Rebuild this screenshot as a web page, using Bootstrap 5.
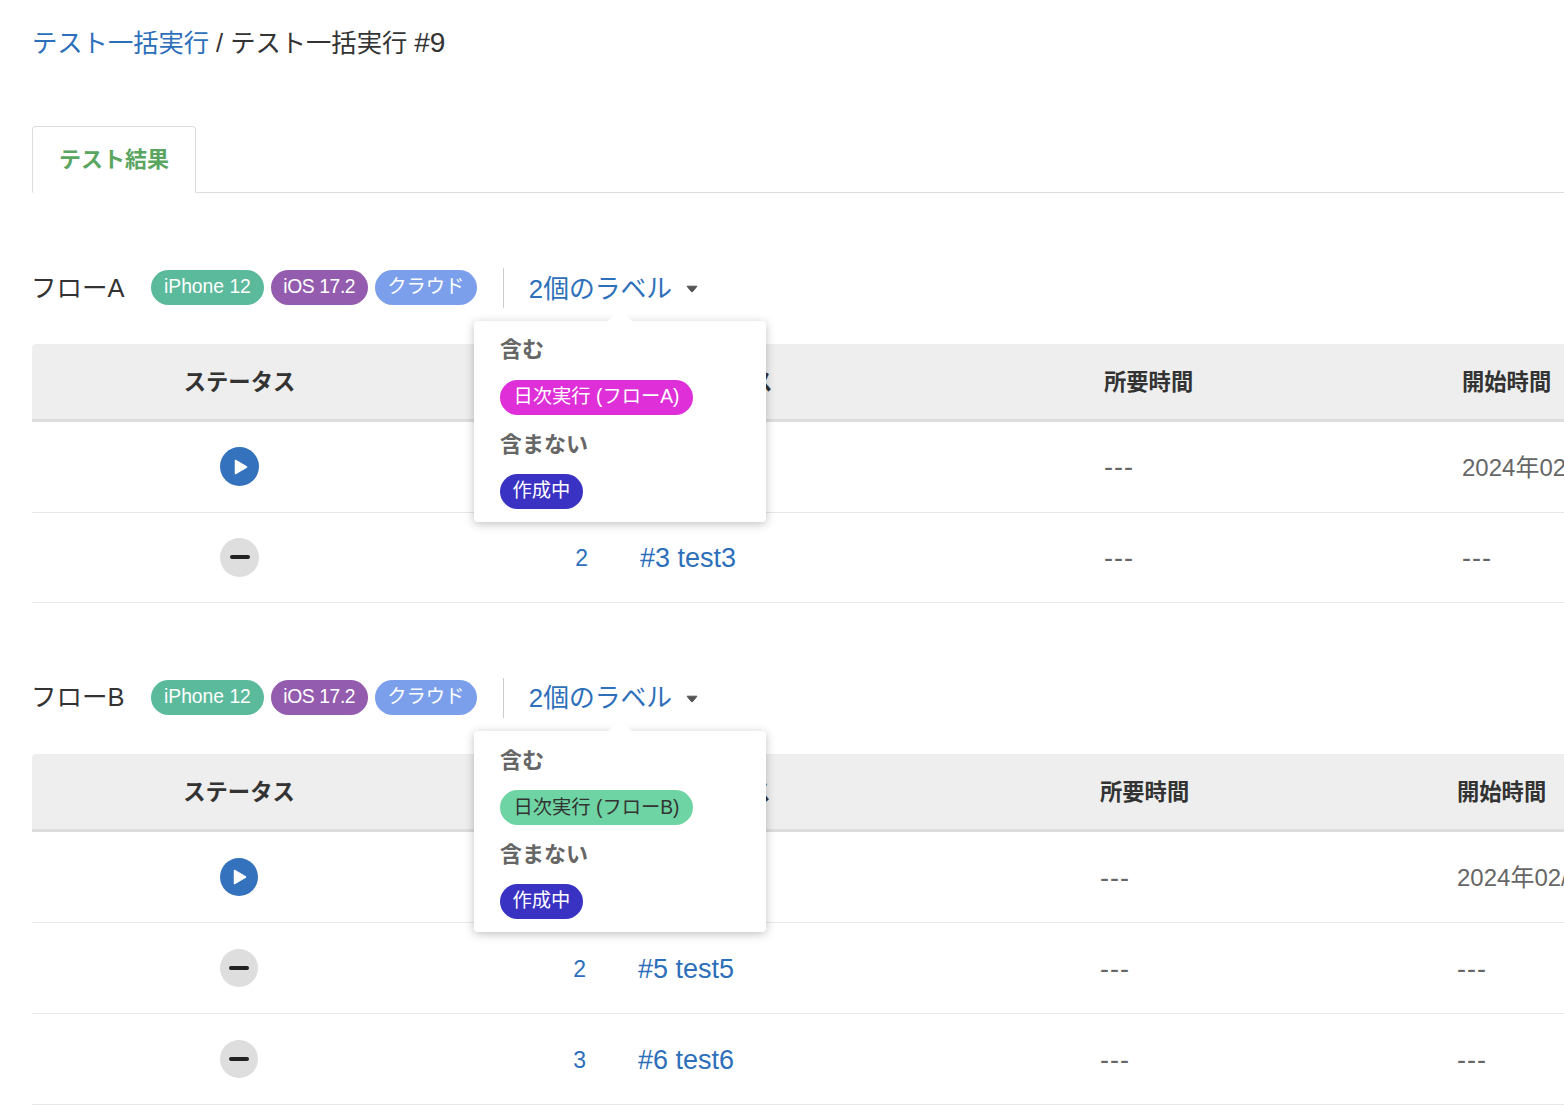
<!DOCTYPE html>
<html lang="ja">
<head>
  <meta charset="UTF-8" />
  <meta name="viewport" content="width=device-width, initial-scale=1.0"/>
  <title>テスト一括実行 #9</title>
  <link href="https://cdn.jsdelivr.net/npm/bootstrap@5.3.3/dist/css/bootstrap.min.css" rel="stylesheet">
  <style>
    html, body { overflow-x: hidden; }
    body {
      font-family: "Liberation Sans", "Noto Sans CJK JP", sans-serif;
      color: #333;
      font-size: 25.3px;
      background: #fff;
    }
    a { color: #2d6fba; text-decoration: none; }

    .page-wrap { padding: 25px 0 0 32px; width: 1900px; }
    .crumbs { line-height: 36px; margin-bottom: 65px; }
    .crumb-no { font-size: 28px; }

    .nav-tabs { border-bottom: 1px solid #ddd; }
    .nav-tabs .nav-link.active {
      color: #5aa55f;
      font-size: 22px;
      font-weight: 700;
      line-height: 32px;
      padding: 17px 26px 16px;
      border-color: #ddd #ddd #fff;
      border-radius: 4px 4px 0 0;
    }

    .flow-block { margin-top: 75px; }
    .flow-block.flow-b { margin-top: 75px; }
    .flow-head { height: 40px; margin-bottom: 36px; position: relative; width: 1532px; }
    .flow-name { font-size: 25.5px; width: 120px; flex: none; margin-left: -1px; }
    .tag-row { margin-top: -1px; gap: 7px; }
    .tag {
      display: inline-flex;
      align-items: center;
      height: 35px;
      padding: 0 12.5px;
      border-radius: 18px;
      font-size: 19.3px;
      color: #fff;
      white-space: nowrap;
    }
    .tag-device { background: #5bba9b; padding: 0 13px; }
    .tag-os { background: #945cae; letter-spacing: -.4px; }
    .tag-cloud { background: #7c9fec; }
    .tag-pink { background: #de2fd8; padding: 0 13.5px; }
    .tag-indigo { background: #3a32c2; }
    .tag-mint { background: #6fd4a3; color: #333; padding: 0 13.5px; }

    .label-toggle { border-left: 1px solid #ccc; height: 40px; padding: 2px 0 0 25px; margin-left: 26px; font-size: 25.8px; }
    .label-toggle svg { margin-left: 14px; }

    .label-pop {
      position: absolute;
      top: 53px;
      left: 442px;
      width: 292px;
      height: 201px;
      padding: 13px 26px;
      background: #fff;
      border-radius: 4px;
      box-shadow: 0 2px 10px rgba(0,0,0,.25);
      z-index: 5;
    }
    .flow-b .label-pop { padding-top: 14px; }
    .label-pop::before {
      content: "";
      position: absolute;
      top: -11px;
      left: 134px;
      border-left: 12px solid transparent;
      border-right: 12px solid transparent;
      border-bottom: 11px solid #fff;
    }
    .pop-title { font-size: 22px; font-weight: 700; color: #666; line-height: 32px; }
    .pop-title.first { margin-bottom: 10px; }
    .pop-title.second { margin: 14px 0 9px; }

    .result-table { table-layout: fixed; width: 1800px; margin: 0; color: #666; }
    .result-table th {
      background: #eee;
      color: #333;
      font-size: 22.3px;
      font-weight: 700;
      height: 76px;
      padding: 3px 16px 0;
      vertical-align: middle;
      border-bottom: 3px solid #ddd;
      white-space: nowrap;
    }
    .flow-b .result-table th { height: 77px; }
    .result-table th:first-child { border-top-left-radius: 4px; }
    .result-table td {
      height: 91px;
      padding: 2px 16px 0;
      vertical-align: middle;
      font-size: 24px;
      border-bottom: 1px solid #e8e8e8;
      white-space: nowrap;
      color: #666;
    }
    .result-table tbody tr:first-child td { height: 92px; }
    .flow-a .result-table tbody tr:last-child td { height: 90px; }
    .result-table td a { font-size: 27px; }
    .result-table .num-cell { padding-right: 36px; text-align: right; }
    .result-table .num-cell a { font-size: 23px; }
    .result-table td.empty-val { font-size: 27px; letter-spacing: 1px; }

    .flow-a .col-status { width: 415px; }
    .flow-a .col-num { width: 177px; }
    .flow-a .col-name { width: 464px; }
    .flow-a .col-time { width: 358px; }
    .flow-b .col-status { width: 414px; }
    .flow-b .col-num { width: 176px; }
    .flow-b .col-name { width: 462px; }
    .flow-b .col-time { width: 357px; }

    .status-dot {
      width: 39px;
      height: 39px;
      margin-top: -4px;
      border-radius: 50%;
      display: inline-flex;
      align-items: center;
      justify-content: center;
      vertical-align: middle;
    }
    .flow-b .status-dot { width: 38px; height: 38px; }
    .dot-running { background: #3572bd; }
    .dot-running svg { margin-left: 2px; }
    .dot-waiting { background: #dedede; }
  </style>
</head>
<body>
  <div class="page-wrap">
    <div class="crumbs"><a href="#">テスト一括実行</a> / テスト一括実行 <span class="crumb-no">#9</span></div>

    <ul class="nav nav-tabs">
      <li class="nav-item"><a class="nav-link active" href="#">テスト結果</a></li>
    </ul>

    <!-- フローA -->
    <section class="flow-block flow-a">
      <div class="flow-head d-flex align-items-center">
        <div class="flow-name">フローA</div>
        <div class="d-flex tag-row">
          <span class="tag tag-device">iPhone 12</span>
          <span class="tag tag-os">iOS 17.2</span>
          <span class="tag tag-cloud">クラウド</span>
        </div>
        <a class="label-toggle d-flex align-items-center" href="#">2個のラベル
          <svg width="12" height="8" viewBox="0 0 12 8"><path d="M1 1.2h10L6.8 6.4a1 1 0 0 1-1.6 0z" fill="#555" stroke="#555" stroke-linejoin="round"/></svg>
        </a>
        <div class="label-pop">
          <div class="pop-title first">含む</div>
          <span class="tag tag-pink">日次実行 (フローA)</span>
          <div class="pop-title second">含まない</div>
          <span class="tag tag-indigo">作成中</span>
        </div>
      </div>
      <table class="table result-table">
        <colgroup><col class="col-status"><col class="col-num"><col class="col-name"><col class="col-time"><col></colgroup>
        <thead>
          <tr><th class="text-center">ステータス</th><th class="num-cell">#</th><th>テストケース</th><th>所要時間</th><th>開始時間</th></tr>
        </thead>
        <tbody>
          <tr>
            <td class="text-center"><span class="status-dot dot-running"><svg width="14" height="16" viewBox="0 0 14 16"><path d="M1.5 1.5L12.5 8 1.5 14.5z" fill="#fff" stroke="#fff" stroke-width="1.5" stroke-linejoin="round"/></svg></span></td>
            <td class="num-cell"><a href="#">1</a></td><td><a href="#">#2 test2</a></td><td class="empty-val">---</td><td>2024年02/15 10:30</td>
          </tr>
          <tr>
            <td class="text-center"><span class="status-dot dot-waiting"><svg width="20" height="6" viewBox="0 0 20 6"><path d="M2 3h16" stroke="#222" stroke-width="4" stroke-linecap="round"/></svg></span></td>
            <td class="num-cell"><a href="#">2</a></td><td><a href="#">#3 test3</a></td><td class="empty-val">---</td><td class="empty-val">---</td>
          </tr>
        </tbody>
      </table>
    </section>

    <!-- フローB -->
    <section class="flow-block flow-b">
      <div class="flow-head d-flex align-items-center">
        <div class="flow-name">フローB</div>
        <div class="d-flex tag-row">
          <span class="tag tag-device">iPhone 12</span>
          <span class="tag tag-os">iOS 17.2</span>
          <span class="tag tag-cloud">クラウド</span>
        </div>
        <a class="label-toggle d-flex align-items-center" href="#">2個のラベル
          <svg width="12" height="8" viewBox="0 0 12 8"><path d="M1 1.2h10L6.8 6.4a1 1 0 0 1-1.6 0z" fill="#555" stroke="#555" stroke-linejoin="round"/></svg>
        </a>
        <div class="label-pop">
          <div class="pop-title first">含む</div>
          <span class="tag tag-mint">日次実行 (フローB)</span>
          <div class="pop-title second">含まない</div>
          <span class="tag tag-indigo">作成中</span>
        </div>
      </div>
      <table class="table result-table">
        <colgroup><col class="col-status"><col class="col-num"><col class="col-name"><col class="col-time"><col></colgroup>
        <thead>
          <tr><th class="text-center">ステータス</th><th class="num-cell">#</th><th>テストケース</th><th>所要時間</th><th>開始時間</th></tr>
        </thead>
        <tbody>
          <tr>
            <td class="text-center"><span class="status-dot dot-running"><svg width="14" height="16" viewBox="0 0 14 16"><path d="M1.5 1.5L12.5 8 1.5 14.5z" fill="#fff" stroke="#fff" stroke-width="1.5" stroke-linejoin="round"/></svg></span></td>
            <td class="num-cell"><a href="#">1</a></td><td><a href="#">#4 test4</a></td><td class="empty-val">---</td><td>2024年02/15 10:30</td>
          </tr>
          <tr>
            <td class="text-center"><span class="status-dot dot-waiting"><svg width="20" height="6" viewBox="0 0 20 6"><path d="M2 3h16" stroke="#222" stroke-width="4" stroke-linecap="round"/></svg></span></td>
            <td class="num-cell"><a href="#">2</a></td><td><a href="#">#5 test5</a></td><td class="empty-val">---</td><td class="empty-val">---</td>
          </tr>
          <tr>
            <td class="text-center"><span class="status-dot dot-waiting"><svg width="20" height="6" viewBox="0 0 20 6"><path d="M2 3h16" stroke="#222" stroke-width="4" stroke-linecap="round"/></svg></span></td>
            <td class="num-cell"><a href="#">3</a></td><td><a href="#">#6 test6</a></td><td class="empty-val">---</td><td class="empty-val">---</td>
          </tr>
        </tbody>
      </table>
    </section>
  </div>
  <script src="https://cdn.jsdelivr.net/npm/bootstrap@5.3.3/dist/js/bootstrap.bundle.min.js"></script>
</body>
</html>
